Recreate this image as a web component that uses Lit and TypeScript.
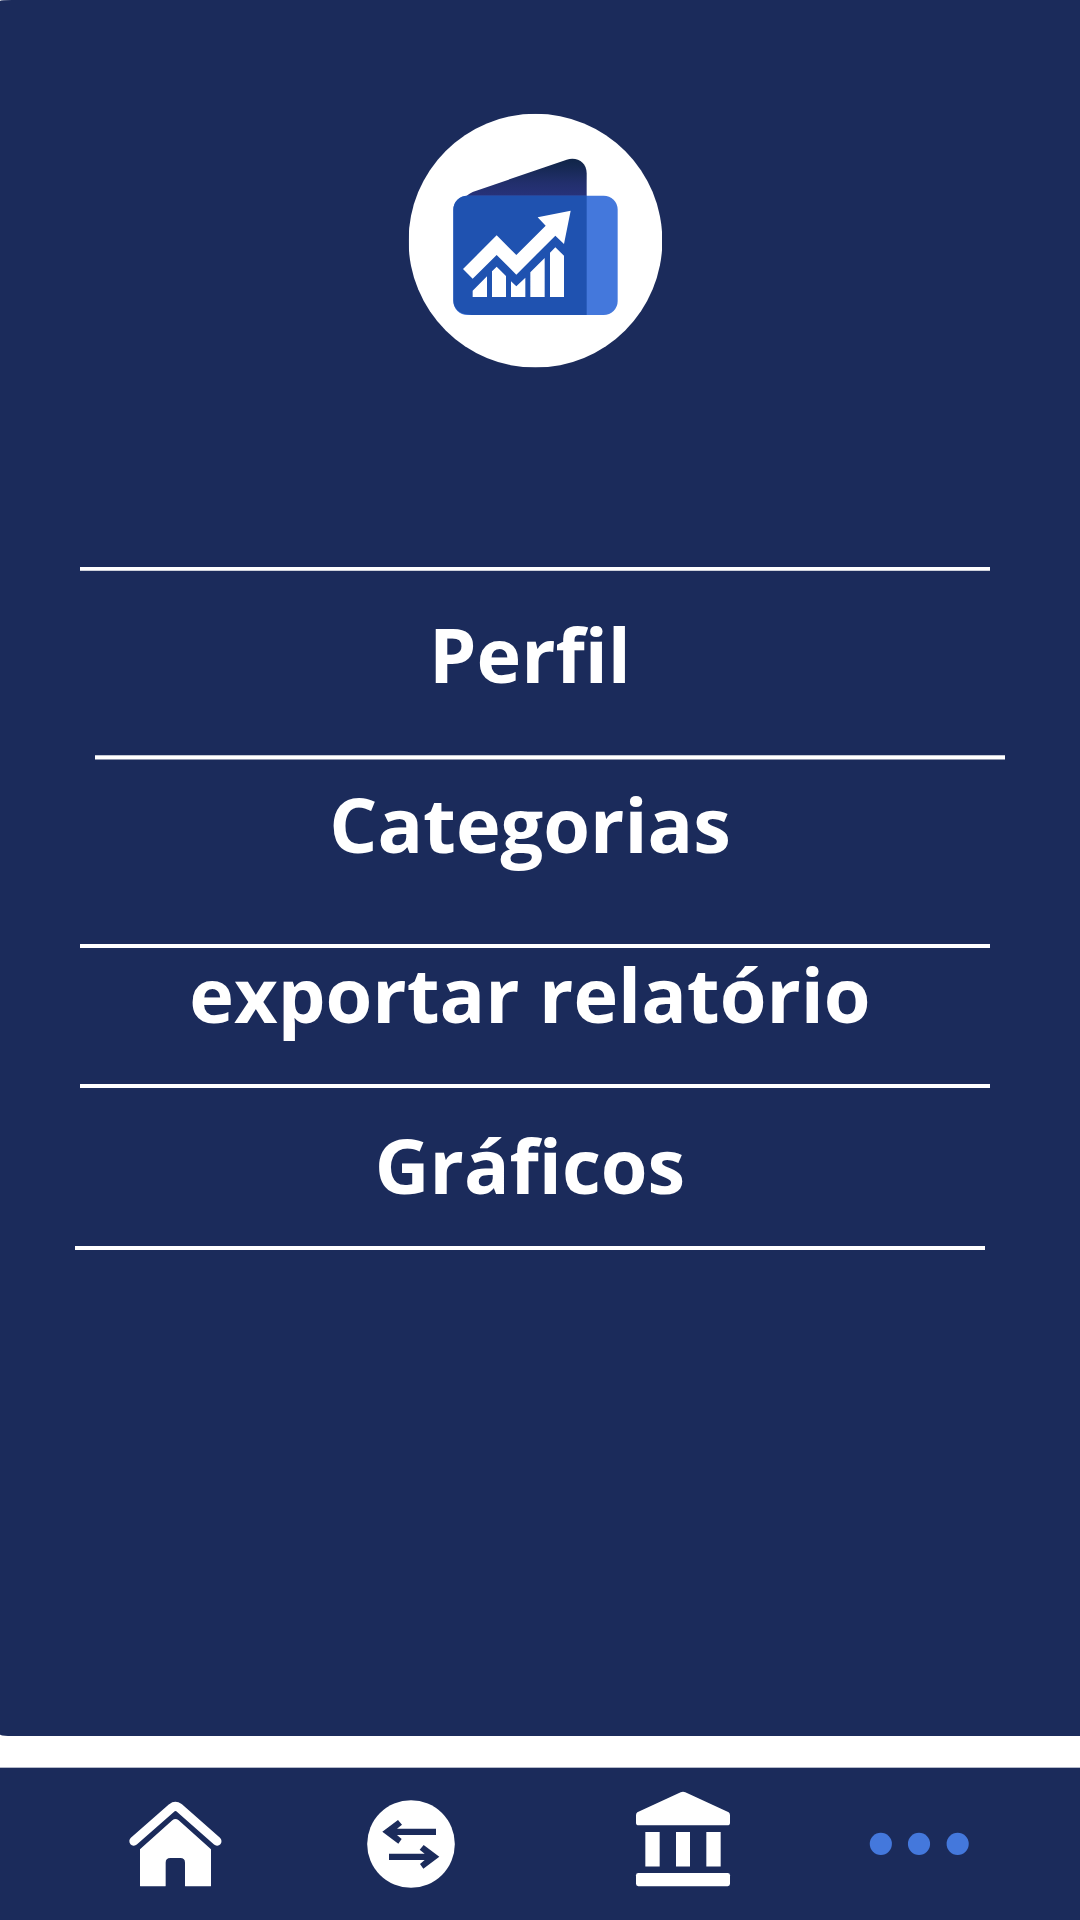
import { LitElement, html, css, svg } from "lit";
import { customElement } from "lit/decorators.js";

const NAVY = "#1b2b5b";

@customElement("app-logo")
class AppLogo extends LitElement {
  static styles = css`
    :host { display: block; width: 270px; height: 280px; }
    svg { display: block; }
  `;
  render() {
    return html`<svg width="270" height="280" viewBox="0 0 810 840" role="img">
      <defs>
        <linearGradient id="flap" x1="0" y1="176" x2="0" y2="288" gradientUnits="userSpaceOnUse">
          <stop offset="0" stop-color="#102548" />
          <stop offset="0.2" stop-color="#152851" />
          <stop offset="0.65" stop-color="#222f6c" />
          <stop offset="1" stop-color="#27327a" />
        </linearGradient>
        <clipPath id="disc"><rect x="26.500" y="41.500" width="759.500" height="761" /></clipPath>
      </defs>
      <circle cx="406.300" cy="422" r="380.700" fill="#fff" clip-path="url(#disc)" />
      <path d="M196 290 Q206 282 218 276 L500 179 C532 169 560 188 560 220 V290Z" fill="url(#flap)" />
      <rect x="160" y="287" width="493" height="358" rx="42" fill="#4478dc" />
      <path d="M202 287 H560 V645 H215 L202 643 A42 42 0 0 1 160 601 V329 A42 42 0 0 1 202 287Z" fill="#1f52b0" />
      <path d="M189 507 L290 406 L349 465 L437 377 L413 352 L512 332 L492 432 L466 407 L349 524 L290 465 L218 536Z" fill="#fff" />
      <path d="M218 572 L261 529 V591 H218Z M276 514 L290 500 L318 528 V591 H276Z M333 544 L349 559 L376 533 V591 H333Z M391 517 L434 474 V591 H391Z M450 458 L466 442 L492 467 V591 H450Z" fill="#fff" />
    </svg>`;
  }
}

const homeIcon = svg`
  <path d="M71.500 183.500 L186 83 Q196 75 207 83 L321 183.500" fill="none" stroke="#fff" stroke-width="27" stroke-linecap="round" stroke-linejoin="round" />
  <path d="M90 208 L187 121 Q196 113 206 121 L303 208 V317 Q303 319 301 319 H227 Q225 319 225 317 V248 Q225 234 211 234 H181 Q167 234 167 248 V317 Q167 319 165 319 H92 Q90 319 90 317Z" fill="#fff" />`;

const transferIcon = svg`
  <circle cx="183" cy="192" r="131.500" fill="#fff" />
  <path d="M97 155 L144 120 L156 134 L141 146 H258 V165 H141 L155 177 L145 191Z" fill="${NAVY}" />
  <path d="M268 230 L221 195 L209 209 L224 221 H117 V240 H224 L210 252 L220 266Z" fill="${NAVY}" />`;

const bankIcon = svg`
  <path d="M182 37 Q189 33 196 37 L326 97 Q330 100 330 106 V128 Q330 136 322 136 H56 Q48 136 48 128 V106 Q48 100 52 97Z" fill="#fff" />
  <path d="M76 156 H119 V259.500 H76Z M168 156 H210 V259.500 H168Z M259 156 H302 V259.500 H259Z" fill="#fff" />
  <rect x="48" y="279" width="282" height="39.500" rx="7" fill="#fff" />`;

const moreIcon = svg`
  <g fill="#4478dc">
    <circle cx="92.500" cy="191.700" r="33.200" />
    <circle cx="207" cy="191.700" r="33.200" />
    <circle cx="323" cy="191.700" r="33.200" />
  </g>`;

@customElement("app-nav")
class AppNav extends LitElement {
  static styles = css`
    :host { display: block; }
    .bar {
      box-sizing: border-box;
      display: grid;
      grid-template-columns: 240px 240px 270px 230px;
      justify-items: end;
      height: 153px;
      padding-top: 12px;
      border-top: 1px solid #b4b9c9;
      background: #1b2b5b;
    }
    .icon { display: block; width: 130px; height: 130px; }
  `;
  render() {
    return html`<nav class="bar">
      ${[homeIcon, transferIcon, bankIcon, moreIcon].map(
        (icon) => html`<svg class="icon" viewBox="0 0 390 390">${icon}</svg>`
      )}
    </nav>`;
  }
}

@customElement("app-root")
class AppRoot extends LitElement {
  static styles = css`
    :host {
      display: flex;
      flex-direction: column;
      width: 1080px;
      height: 1920px;
      overflow: hidden;
      background: #fff;
      font-family: "Open Sans", sans-serif;
    }
    .screen {
      box-sizing: border-box;
      height: 1736px;
      padding-top: 100px;
      background: #1b2b5b;
      border-bottom-left-radius: 8px 1.500px;
      border-top-left-radius: 12px 1px;
    }
    .logo { margin-left: 400px; }
    .menu { display: flex; flex-direction: column; padding-top: 187px; }
    .line { box-sizing: border-box; width: 910px; height: 4px; margin-left: 80px; background: #fff; }
    .first { border-bottom: 1px solid #cdd0da; }
    .shifted {
      height: 5px;
      margin-left: 95px;
      background-clip: padding-box;
      border-top: 1px solid #c3c7d4;
      border-bottom: 1px solid #8d95ad;
    }
    .last { margin-left: 75px; }
    .item {
      box-sizing: border-box;
      width: 1060px;
      text-align: center;
      color: #fff;
      font-size: 75.6px;
      font-weight: 700;
      line-height: 80px;
      white-space: nowrap;
    }
    .perfil { height: 184px; padding-top: 43px; }
    .categorias { height: 184px; padding-top: 24px; }
    .exportar { height: 136px; padding-top: 6px; }
    .graficos { height: 158px; padding-top: 37px; }
    .band { height: 31px; }
  `;
  render() {
    return html`
      <main class="screen">
        <app-logo class="logo"></app-logo>
        <div class="menu">
          <div class="line first"></div>
          <div class="item perfil">Perfil</div>
          <div class="line shifted"></div>
          <div class="item categorias">Categorias</div>
          <div class="line"></div>
          <div class="item exportar">exportar relatório</div>
          <div class="line"></div>
          <div class="item graficos">Gráficos</div>
          <div class="line last"></div>
        </div>
      </main>
      <div class="band"></div>
      <app-nav></app-nav>
    `;
  }
}
